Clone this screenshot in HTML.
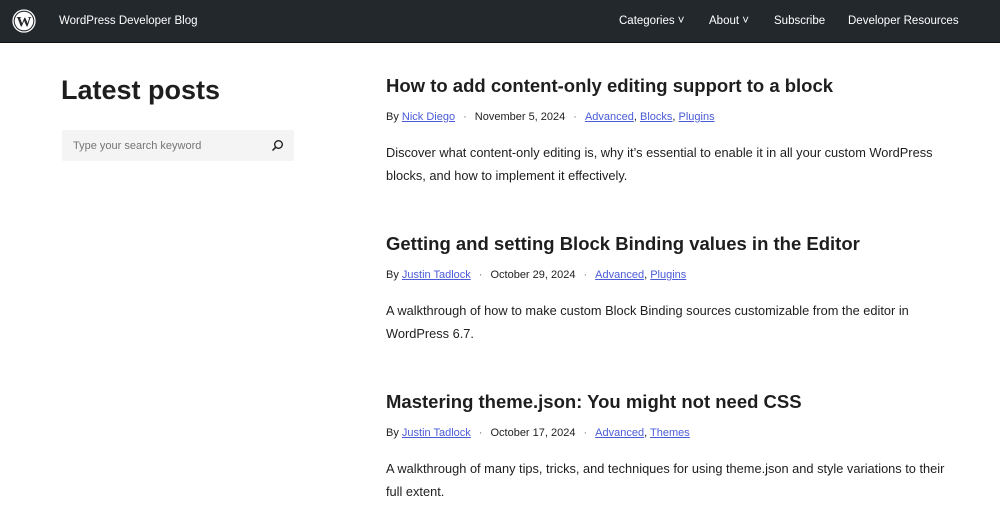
<!DOCTYPE html>
<html><head><meta charset="utf-8"><style>
*{margin:0;padding:0;box-sizing:border-box}
body{width:1000px;height:517px;overflow:hidden;background:#fff;font-family:"Liberation Sans",sans-serif;color:#1e1e1e}
.hdr{position:absolute;top:0;left:0;width:1000px;height:43px;background:#23282d;border-bottom:1px solid #111}
.hdr .t{position:absolute;left:59px;top:15px;color:#fff;font-size:11.5px}
.nav{position:absolute;top:15px;color:#fff;font-size:11.5px}
h1{position:absolute;left:61px;top:75px;font-size:27px;font-weight:bold;letter-spacing:0}
.search{position:absolute;left:62px;top:130px;width:232px;height:31px;background:#f4f4f4;border-radius:2px}
.search span{position:absolute;left:11px;top:10px;font-size:11px;color:#757575}
.post{position:absolute;left:386px;width:570px}
.post h2{font-size:18.5px;font-weight:bold;line-height:24px}
.meta{margin-top:13px;font-size:11px;color:#1e1e1e}
.meta a{color:#4a5bd8;text-decoration:underline}
.meta .d{margin:0 8px;color:#757575}
.ex{margin-top:18px;font-size:12.8px;line-height:23px}
</style></head><body>
<div class="hdr">
<svg style="position:absolute;left:12px;top:9px" width="24" height="24" viewBox="0 0 24 24"><circle cx="12" cy="12" r="11" fill="none" stroke="#fff" stroke-width="1.3"/><circle cx="12" cy="12" r="9.3" fill="#fff"/><text x="12" y="17.5" text-anchor="middle" font-family="Liberation Serif" font-size="15" font-weight="bold" fill="#23282d">W</text></svg>
<div class="t">WordPress Developer Blog</div>
<div class="nav" style="left:619px">Categories ˅</div>
<div class="nav" style="left:709px">About ˅</div>
<div class="nav" style="left:774px">Subscribe</div>
<div class="nav" style="left:848px">Developer Resources</div>
</div>
<h1>Latest posts</h1>
<div class="search"><span>Type your search keyword</span>
<svg style="position:absolute;left:209px;top:9px" width="13" height="13" viewBox="0 0 13 13"><circle cx="7.5" cy="5.5" r="3.8" fill="none" stroke="#1e1e1e" stroke-width="1.4"/><path d="M4.8 8.2L1.5 11.5" stroke="#1e1e1e" stroke-width="1.5"/></svg></div>
<div class="post" style="top:74px"><h2>How to add content-only editing support to a block</h2>
<div class="meta">By <a>Nick Diego</a><span class="d">·</span>November 5, 2024<span class="d">·</span><a>Advanced</a>, <a>Blocks</a>, <a>Plugins</a></div>
<div class="ex">Discover what content-only editing is, why it’s essential to enable it in all your custom WordPress blocks, and how to implement it effectively.</div></div>
<div class="post" style="top:232px"><h2>Getting and setting Block Binding values in the Editor</h2>
<div class="meta">By <a>Justin Tadlock</a><span class="d">·</span>October 29, 2024<span class="d">·</span><a>Advanced</a>, <a>Plugins</a></div>
<div class="ex">A walkthrough of how to make custom Block Binding sources customizable from the editor in WordPress 6.7.</div></div>
<div class="post" style="top:390px"><h2>Mastering theme.json: You might not need CSS</h2>
<div class="meta">By <a>Justin Tadlock</a><span class="d">·</span>October 17, 2024<span class="d">·</span><a>Advanced</a>, <a>Themes</a></div>
<div class="ex">A walkthrough of many tips, tricks, and techniques for using theme.json and style variations to their full extent.</div></div>
</body></html>
